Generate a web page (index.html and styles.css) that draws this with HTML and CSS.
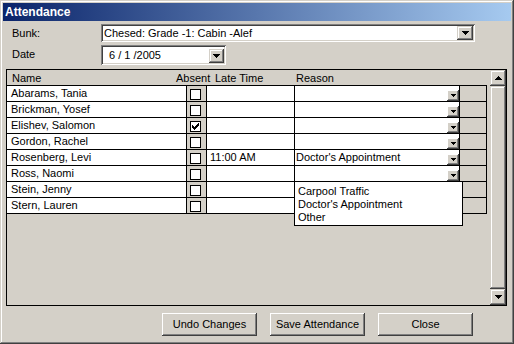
FILE: index.html
```html
<!DOCTYPE html>
<html>
<head>
<meta charset="utf-8">
<link rel="stylesheet" href="styles.css">
</head>
<body>
<div class="window">
  <div class="titlebar">Attendance</div>

  <div class="form-row">
    <div class="label">Bunk:</div>
    <div class="combo bunk">
      <div class="combo-text">Chesed: Grade -1: Cabin -Alef</div>
      <div class="btn-3d combo-btn"><svg width="7" height="4" viewBox="0 0 7 4"><path d="M0 0h7v1h-1v1h-1v1h-1v1h-1v-1h-1v-1h-1v-1h-1z"/></svg></div>
    </div>
  </div>
  <div class="form-row second">
    <div class="label">Date</div>
    <div class="combo date">
      <div class="combo-text date-text">6 / 1 /2005</div>
      <div class="btn-3d combo-btn date-btn"><svg width="7" height="4" viewBox="0 0 7 4"><path d="M0 0h7v1h-1v1h-1v1h-1v1h-1v-1h-1v-1h-1v-1h-1z"/></svg></div>
    </div>
  </div>

  <div class="grid">
    <div class="grid-main">
      <div class="grid-head">
        <div class="h-name">Name</div>
        <div class="h-absent">Absent</div>
        <div class="h-late">Late Time</div>
        <div class="h-reason">Reason</div>
      </div>
      <div class="rows">
        <div class="row">
          <div class="c-name">Abarams, Tania</div>
          <div class="c-absent"><span class="chk"></span></div>
          <div class="c-late"></div>
          <div class="c-reason"><span class="r-text"></span><span class="btn-sm cell-btn"><svg width="5" height="3" viewBox="0 0 5 3"><path d="M0 0h5v1h-1v1h-1v1h-1v-1h-1v-1h-1z"/></svg></span></div>
          <div class="c-fill"></div>
        </div>
        <div class="row">
          <div class="c-name">Brickman, Yosef</div>
          <div class="c-absent"><span class="chk"></span></div>
          <div class="c-late"></div>
          <div class="c-reason"><span class="r-text"></span><span class="btn-sm cell-btn"><svg width="5" height="3" viewBox="0 0 5 3"><path d="M0 0h5v1h-1v1h-1v1h-1v-1h-1v-1h-1z"/></svg></span></div>
          <div class="c-fill"></div>
        </div>
        <div class="row">
          <div class="c-name">Elishev, Salomon</div>
          <div class="c-absent"><span class="chk"><svg width="9" height="9" viewBox="0 0 9 9"><rect x="7" y="1" width="1" height="1"/><rect x="6" y="2" width="2" height="1"/><rect x="1" y="3" width="1" height="1"/><rect x="5" y="3" width="3" height="1"/><rect x="1" y="4" width="2" height="1"/><rect x="4" y="4" width="3" height="1"/><rect x="1" y="5" width="5" height="1"/><rect x="2" y="6" width="3" height="1"/><rect x="3" y="7" width="1" height="1"/></svg></span></div>
          <div class="c-late"></div>
          <div class="c-reason"><span class="r-text"></span><span class="btn-sm cell-btn"><svg width="5" height="3" viewBox="0 0 5 3"><path d="M0 0h5v1h-1v1h-1v1h-1v-1h-1v-1h-1z"/></svg></span></div>
          <div class="c-fill"></div>
        </div>
        <div class="row">
          <div class="c-name">Gordon, Rachel</div>
          <div class="c-absent"><span class="chk"></span></div>
          <div class="c-late"></div>
          <div class="c-reason"><span class="r-text"></span><span class="btn-sm cell-btn"><svg width="5" height="3" viewBox="0 0 5 3"><path d="M0 0h5v1h-1v1h-1v1h-1v-1h-1v-1h-1z"/></svg></span></div>
          <div class="c-fill"></div>
        </div>
        <div class="row">
          <div class="c-name">Rosenberg, Levi</div>
          <div class="c-absent"><span class="chk"></span></div>
          <div class="c-late">11:00 AM</div>
          <div class="c-reason"><span class="r-text">Doctor's Appointment</span><span class="btn-sm cell-btn"><svg width="5" height="3" viewBox="0 0 5 3"><path d="M0 0h5v1h-1v1h-1v1h-1v-1h-1v-1h-1z"/></svg></span></div>
          <div class="c-fill"></div>
        </div>
        <div class="row">
          <div class="c-name">Ross, Naomi</div>
          <div class="c-absent"><span class="chk"></span></div>
          <div class="c-late"></div>
          <div class="c-reason"><span class="r-text"></span><span class="btn-sm cell-btn"><svg width="5" height="3" viewBox="0 0 5 3"><path d="M0 0h5v1h-1v1h-1v1h-1v-1h-1v-1h-1z"/></svg></span></div>
          <div class="c-fill"></div>
        </div>
        <div class="row">
          <div class="c-name">Stein, Jenny</div>
          <div class="c-absent"><span class="chk"></span></div>
          <div class="c-late"></div>
          <div class="c-reason"><span class="r-text"></span></div>
          <div class="c-fill"></div>
        </div>
        <div class="row">
          <div class="c-name">Stern, Lauren</div>
          <div class="c-absent"><span class="chk"></span></div>
          <div class="c-late"></div>
          <div class="c-reason"><span class="r-text"></span></div>
          <div class="c-fill"></div>
        </div>

        <div class="droplist">
          <div class="item">Carpool Traffic</div>
          <div class="item">Doctor's Appointment</div>
          <div class="item">Other</div>
        </div>
      </div>
    </div>
    <div class="scrollbar">
      <div class="btn-3d sb-btn"><svg width="7" height="4" viewBox="0 0 7 4"><path d="M3 0h1v1h1v1h1v1h1v1h-7v-1h1v-1h1v-1h1z"/></svg></div>
      <div class="btn-3d sb-thumb"></div>
      <div class="btn-3d sb-btn"><svg width="7" height="4" viewBox="0 0 7 4"><path d="M0 0h7v1h-1v1h-1v1h-1v1h-1v-1h-1v-1h-1v-1h-1z"/></svg></div>
    </div>
  </div>

  <div class="buttons">
    <div class="push">Undo Changes</div>
    <div class="push">Save Attendance</div>
    <div class="push">Close</div>
  </div>
</div>
</body>
</html>
```

FILE: styles.css
```css
* { box-sizing: border-box; }

html, body {
  margin: 0;
  padding: 0;
  background: #d4d0c8;
}

body {
  font-family: "Liberation Sans", Arial, sans-serif;
  font-size: 11px;
  color: #000;
}

.window {
  width: 514px;
  height: 344px;
  padding: 3px;
  background: #d4d0c8;
  box-shadow: inset -1px -1px #404040, inset 1px 1px #d4d0c8, inset -2px -2px #808080, inset 2px 2px #fff;
  overflow: hidden;
}

.titlebar {
  height: 18px;
  line-height: 18px;
  padding-left: 2px;
  font-size: 12px;
  font-weight: bold;
  color: #fff;
  background: linear-gradient(to right, #0a246a, #a6caf0);
}

.form-row {
  display: flex;
  align-items: flex-start;
  margin-top: 3px;
}

.label {
  width: 89px;
  margin-left: 9px;
  line-height: 18px;
}

.combo {
  display: flex;
  background: #fff;
  padding: 2px;
  box-shadow: inset 1px 1px #808080, inset -1px -1px #fff, inset 2px 2px #404040, inset -2px -2px #d4d0c8;
}

.combo.bunk {
  width: 374px;
  height: 18px;
}

.combo.date {
  width: 125px;
  height: 20px;
  padding: 4px 2px 2px 8px;
}

.combo-text {
  flex: 1;
  line-height: 14px;
  padding-left: 1px;
  white-space: pre;
}

.date-text {
  padding-left: 0;
  line-height: 13px;
}

.btn-3d {
  background: #d4d0c8;
  box-shadow: inset -1px -1px #404040, inset 1px 1px #d4d0c8, inset -2px -2px #808080, inset 2px 2px #fff;
  display: flex;
  align-items: center;
  justify-content: center;
}

.combo-btn {
  width: 16px;
  height: 14px;
}

.date-btn {
  width: 15px;
}

.btn-3d svg, .btn-sm svg { display: block; fill: #000; }

.grid {
  margin: 4px 0 0 3px;
  width: 501px;
  height: 237px;
  border: 1px solid #000;
  display: flex;
  background: #d4d0c8;
}

.grid-main {
  flex: 1;
}

.grid-head {
  width: 480px;
  height: 16px;
  border-bottom: 1px solid #000;
  display: flex;
  line-height: 14px;
  padding-top: 1px;
  white-space: nowrap;
}

.h-name { width: 169px; padding-left: 5px; }
.h-absent { width: 39px; }
.h-late { width: 81px; }
.h-reason { flex: 1; }

.rows {
  position: relative;
  width: 480px;
}

.row {
  display: flex;
  height: 16px;
  border-bottom: 1px solid #000;
  line-height: 15px;
  white-space: nowrap;
}

.row > div {
  border-right: 1px solid #000;
  height: 15px;
}

.c-name {
  width: 180px;
  background: #fff;
  padding-left: 4px;
}

.c-absent {
  width: 20px;
  background: #d4d0c8;
  padding: 3px 0 0 3px;
}

.chk {
  display: block;
  width: 11px;
  height: 11px;
  border: 1px solid #000;
  background: #fff;
}

.chk svg { display: block; fill: #000; }

.c-late {
  width: 88px;
  background: #fff;
  padding-left: 3px;
}

.c-reason {
  width: 165px;
  background: #fff;
  padding-left: 1px;
  display: flex;
  align-items: flex-end;
}

.r-text {
  flex: 1;
  align-self: stretch;
}

.btn-sm {
  background: #d4d0c8;
  box-shadow: inset -1px -1px #404040, inset 1px 1px #fff, inset -2px -2px #808080;
  display: flex;
  align-items: center;
  justify-content: center;
}

.cell-btn {
  width: 12px;
  height: 11px;
  padding-bottom: 1px;
}

.c-fill {
  width: 27px;
  background: #d4d0c8;
}

.droplist {
  position: absolute;
  left: 287px;
  top: 95px;
  width: 169px;
  height: 45px;
  background: #fff;
  border: 1px solid #000;
  padding: 3px 0 1px 3px;
  line-height: 13px;
  white-space: nowrap;
}

.scrollbar {
  width: 16px;
  display: flex;
  flex-direction: column;
}

.sb-btn {
  width: 16px;
  height: 16px;
}

.sb-thumb {
  flex: 1;
}

.buttons {
  display: flex;
  justify-content: flex-end;
  gap: 13px;
  padding-right: 38px;
  margin-top: 7px;
}

.push {
  width: 95px;
  height: 23px;
  line-height: 23px;
  text-align: center;
  background: #d4d0c8;
  box-shadow: inset -1px -1px #404040, inset 1px 1px #fff, inset -2px -2px #808080;
  white-space: nowrap;
}
```
